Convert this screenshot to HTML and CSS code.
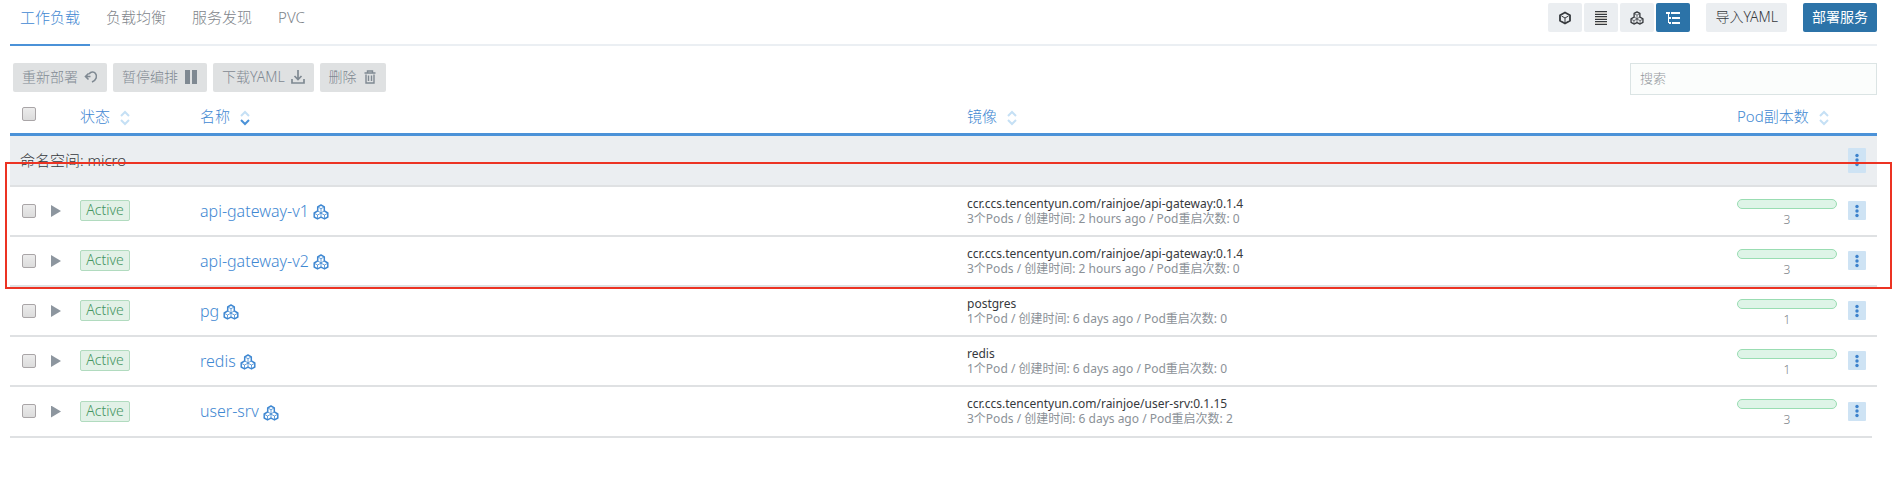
FILE: index.html
```html
<!DOCTYPE html>
<html lang="zh-CN">
<head>
<meta charset="utf-8">
<title>工作负载</title>
<link rel="stylesheet" href="styles.css">
</head>
<body>
<svg class="sprite" aria-hidden="true">
  <symbol id="cubes" viewBox="0 0 16 16">
    <g fill="none" stroke="currentColor" stroke-linejoin="round">
      <path stroke-width="1.500" d="M8 1 11.300 2.800V6.800L14.800 9V13L11.500 14.900 8 13.200 4.500 14.900 1.200 13V9L4.700 6.800V2.800Z"/>
      <path stroke-width=".8" d="M5.200 3.200 8 4.700 10.800 3.200M8 4.700V8.500M4.700 7 8 8.800 11.300 7M8 8.800V13M1.700 9.500 4.500 11 8 9.200 11.500 11 14.300 9.500M4.500 11V14.500M11.500 11V14.500"/>
    </g>
  </symbol>
  <symbol id="sort" viewBox="0 0 10 16">
    <g fill="none" stroke-width="2"><path class="up" d="M1 6 5 2 9 6"/><path class="down" d="M1 10 5 14 9 10"/></g>
  </symbol>
  <symbol id="dots" viewBox="0 0 4 14">
    <g fill="currentColor"><circle cx="2" cy="2.500" r="1.700"/><circle cx="2" cy="7" r="1.700"/><circle cx="2" cy="11.500" r="1.700"/></g>
  </symbol>
</svg>
<header class="topbar">
  <nav class="tabs">
    <a class="tab active" href="#workloads">工作负载</a>
    <a class="tab" href="#balancing">负载均衡</a>
    <a class="tab" href="#discovery">服务发现</a>
    <a class="tab" href="#pvc">PVC</a>
  </nav>
  <div class="actions">
    <div class="views">
      <button class="btn view" aria-label="列表"><svg width="14" height="14" viewBox="0 0 14 14"><g fill="none" stroke="currentColor" stroke-width="1.800" stroke-linejoin="round"><path d="M7 1.500 12 4.200V9.800L7 12.500 2 9.800V4.200Z"/><path stroke-width="1" d="M3.500 5 7 7 10.500 5M7 7V12"/></g></svg></button>
      <button class="btn view" aria-label="主机"><svg width="14" height="14" viewBox="0 0 14 14"><path fill="#c4c2be" d="M1 0H13V14H1Z"/><path fill="currentColor" d="M1 0H13V1H1ZM1 3H13V4H1ZM1 5H13V6H1ZM1 8H13V9H1ZM1 10H13V11H1ZM1 13H13V14H1Z"/><path fill="#ebeef1" d="M1 4H13V5H1ZM1 9H13V10H1Z"/></svg></button>
      <button class="btn view" aria-label="命名空间"><svg width="14" height="14"><use href="#cubes"/></svg></button>
      <button class="btn view selected" aria-label="分组"><svg width="14" height="12" viewBox="0 0 14 12"><path fill="currentColor" d="M0 0H4V2H0ZM5 0H14V2H5ZM3 5H5V7H3ZM6 5H14V7H6ZM3 10H5V12H3ZM6 10H14V12H6ZM2 2H3V11H2Z"/></svg></button>
    </div>
    <button class="btn">导入YAML</button>
    <button class="btn primary">部署服务</button>
  </div>
</header>
<main>
  <div class="toolbar">
    <div class="bulk">
      <button class="btn muted">重新部署 <svg width="14" height="12" viewBox="0 0 14 12"><path d="M4.500 2.500 1.500 5.500 4.500 8.500M2 5.500H6.500M5 3C7 .5 10 .5 11.500 2.500 13.500 5 12.500 9 8 11" fill="none" stroke="currentColor" stroke-width="1.600"/></svg></button>
      <button class="btn muted">暂停编排 <svg width="14" height="14" viewBox="0 0 14 14"><path d="M1 0H6V14H1ZM8 0H13V14H8Z" fill="currentColor"/></svg></button>
      <button class="btn muted">下载YAML <svg width="14" height="14" viewBox="0 0 14 14"><path d="M7 0V9M3.500 6 7 9.500 10.500 6M1 9V13H13V9" fill="none" stroke="currentColor" stroke-width="1.700"/></svg></button>
      <button class="btn muted">删除 <svg width="14" height="14" viewBox="0 0 14 14"><path d="M1.500 3H12.500M4.500 2.500V1H9.500V2.500M3 4.500V13H11V4.500M5.500 5.500V11M8.500 5.500V11" fill="none" stroke="currentColor" stroke-width="1.400"/></svg></button>
    </div>
    <input class="search" type="search" placeholder="搜索" aria-label="搜索">
  </div>
  <div class="table-wrap">
    <table>
      <colgroup><col class="c-check"><col class="c-expand"><col class="c-state"><col class="c-name"><col class="c-image"><col class="c-pods"><col class="c-menu"></colgroup>
      <thead><tr>
        <th><input type="checkbox" aria-label="全选"></th><th></th>
        <th>状态 <svg class="sort" width="10" height="16"><use href="#sort"/></svg></th>
        <th>名称 <svg class="sort sorted" width="10" height="16"><use href="#sort"/></svg></th>
        <th>镜像 <svg class="sort" width="10" height="16"><use href="#sort"/></svg></th>
        <th>Pod副本数 <svg class="sort" width="10" height="16"><use href="#sort"/></svg></th><th></th>
      </tr></thead>
      <tbody>
        <tr class="group"><td colspan="6">命名空间: micro</td><td><button class="menu tall" aria-label="更多"><svg width="4" height="14"><use href="#dots"/></svg></button></td></tr>
        <tr><td><input type="checkbox" aria-label="api-gateway-v1"></td><td><button class="expand" aria-label="展开"></button></td><td><span class="badge">Active</span></td><td><a class="name" href="#v1">api-gateway-v1 <svg width="16" height="16"><use href="#cubes"/></svg></a></td><td class="image"><div>ccr.ccs.tencentyun.com/rainjoe/api-gateway:0.1.4</div><div class="meta">3个Pods / 创建时间: 2 hours ago / Pod重启次数: 0</div></td><td class="pods"><div class="bar"></div>3</td><td><button class="menu" aria-label="更多"><svg width="4" height="14"><use href="#dots"/></svg></button></td></tr>
        <tr><td><input type="checkbox" aria-label="api-gateway-v2"></td><td><button class="expand" aria-label="展开"></button></td><td><span class="badge">Active</span></td><td><a class="name" href="#v2">api-gateway-v2 <svg width="16" height="16"><use href="#cubes"/></svg></a></td><td class="image"><div>ccr.ccs.tencentyun.com/rainjoe/api-gateway:0.1.4</div><div class="meta">3个Pods / 创建时间: 2 hours ago / Pod重启次数: 0</div></td><td class="pods"><div class="bar"></div>3</td><td><button class="menu" aria-label="更多"><svg width="4" height="14"><use href="#dots"/></svg></button></td></tr>
        <tr><td><input type="checkbox" aria-label="pg"></td><td><button class="expand" aria-label="展开"></button></td><td><span class="badge">Active</span></td><td><a class="name" href="#pg">pg <svg width="16" height="16"><use href="#cubes"/></svg></a></td><td class="image"><div>postgres</div><div class="meta">1个Pod / 创建时间: 6 days ago / Pod重启次数: 0</div></td><td class="pods"><div class="bar"></div>1</td><td><button class="menu" aria-label="更多"><svg width="4" height="14"><use href="#dots"/></svg></button></td></tr>
        <tr><td><input type="checkbox" aria-label="redis"></td><td><button class="expand" aria-label="展开"></button></td><td><span class="badge">Active</span></td><td><a class="name" href="#redis">redis <svg width="16" height="16"><use href="#cubes"/></svg></a></td><td class="image"><div>redis</div><div class="meta">1个Pod / 创建时间: 6 days ago / Pod重启次数: 0</div></td><td class="pods"><div class="bar"></div>1</td><td><button class="menu" aria-label="更多"><svg width="4" height="14"><use href="#dots"/></svg></button></td></tr>
        <tr class="last"><td><input type="checkbox" aria-label="user-srv"></td><td><button class="expand" aria-label="展开"></button></td><td><span class="badge">Active</span></td><td><a class="name" href="#user">user-srv <svg width="16" height="16"><use href="#cubes"/></svg></a></td><td class="image"><div>ccr.ccs.tencentyun.com/rainjoe/user-srv:0.1.15</div><div class="meta">3个Pods / 创建时间: 6 days ago / Pod重启次数: 2</div></td><td class="pods"><div class="bar"></div>3</td><td><button class="menu" aria-label="更多"><svg width="4" height="14"><use href="#dots"/></svg></button></td></tr>
      </tbody>
    </table>
    <div class="highlight"></div>
  </div>
</main>
</body>
</html>
```
FILE: styles.css
```css
* { box-sizing: border-box; }
body {
  margin: 0;
  padding: 0 26px 0 10px;
  background: #fff;
  color: #36393d;
  font: 300 15px/20px "Noto Sans", "Noto Sans CJK SC", sans-serif;
}
.sprite { position: absolute; width: 0; height: 0; }
a { color: #3f88d2; text-decoration: none; }
svg { vertical-align: middle; }
.topbar {
  display: flex;
  justify-content: space-between;
  align-items: stretch;
  height: 46px;
  border-bottom: 2px solid #ebeff3;
}
.tabs { display: flex; gap: 6px; }
.tab {
  height: 46px;
  padding: 7px 10px 0;
  color: #7e848a;
  border-bottom: 2px solid transparent;
}
.tab.active { color: #3f88d2; border-color: #4b92d8; }
.actions { display: flex; gap: 16px; padding-top: 3px; }
.views { display: flex; gap: 2px; }
.btn {
  display: flex;
  align-items: center;
  gap: 6px;
  height: 29px;
  padding: 0 9px 1px;
  border: 0;
  border-radius: 2px;
  background: #ebeef1;
  color: #36393d;
  font: inherit;
  font-size: 14px;
}
.btn.view { width: 34px; justify-content: center; padding: 0; }
.btn.selected, .btn.primary { background: #2c73a8; color: #fff; }
.btn.primary { font-weight: 400; }
.btn.muted { background: #dfe1e2; color: #7f8992; }
.toolbar {
  display: flex;
  justify-content: space-between;
  padding: 17px 0 0 3px;
}
.bulk { display: flex; gap: 6px; }
.search {
  width: 247px;
  height: 32px;
  padding: 0 9px 2px;
  border: 1px solid #dbe4e4;
  border-radius: 0;
  background: #fbfdfc;
  font: inherit;
  font-size: 13px;
}
.search::placeholder { color: #91979b; }
.table-wrap { position: relative; }
table { width: 100%; table-layout: fixed; border-collapse: separate; border-spacing: 0; }
.c-check { width: 38px; }
.c-expand { width: 32px; }
.c-state { width: 120px; }
.c-image { width: 770px; }
.c-pods { width: 111px; }
.c-menu { width: 29px; }
th {
  height: 41px;
  padding: 4px 0 0;
  border-bottom: 3px solid #4b92d8;
  color: #3f88d2;
  font-weight: 300;
  text-align: left;
}
td { height: 50px; padding: 0 0 1px; border-bottom: 2px solid #dfe1e3; }
.group td { height: 51px; background: #ebeef1; }
.group td:first-child { padding: 0 0 2px 10px; }
.last td { height: 51px; }
.last td:last-child {
  border-image: linear-gradient(to right, #dfe1e3 calc(100% - 6px), transparent 0) 2;
}
input[type="checkbox"] {
  display: block;
  appearance: none;
  width: 14px;
  height: 14px;
  margin: 0 0 0 12px;
  border: 1px solid #a9a5a7;
  border-radius: 2px;
  background: linear-gradient(#ececec, #dcdcdc);
}
th input[type="checkbox"] { margin-bottom: 4px; }
.sort { margin-left: 6px; }
.sorted { --down: #4b92d8; }
.up { stroke: #c5e0f5; }
.down { stroke: var(--down, #c5e0f5); }
.expand {
  display: block;
  width: 10px;
  height: 12px;
  margin: 1px 0 0 3px;
  padding: 0;
  border: 0;
  background: #8d969f;
  clip-path: polygon(0 0, 100% 50%, 0 100%);
}
.badge {
  display: block;
  width: 50px;
  height: 21px;
  border: 1px solid #b1dbbf;
  border-radius: 2px;
  background: #e2f1e7;
  color: #459561;
  font-size: 14px;
  line-height: 18px;
  text-align: center;
}
.name { font-size: 16px; }
.image { font-size: 12px; font-weight: 400; line-height: 15px; }
.meta { color: #8b9197; }
.pods {
  padding-right: 11px;
  color: #7e848a;
  font-size: 12px;
  line-height: 16px;
  text-align: center;
}
.bar {
  width: 100px;
  height: 10px;
  margin: 5px 0 3px;
  border: 1px solid #99ddb2;
  border-radius: 5px;
  background: #def4e7;
}
.menu {
  display: flex;
  align-items: center;
  justify-content: center;
  width: 18px;
  height: 19px;
  padding: 0;
  border: 0;
  border-radius: 1px;
  background: #cee3f4;
  color: #3d82cc;
}
.menu.tall { height: 25px; }
.highlight {
  position: absolute;
  inset: 67px -15px auto -5px;
  height: 127px;
  border: 2px solid #ec3323;
  pointer-events: none;
}
```
